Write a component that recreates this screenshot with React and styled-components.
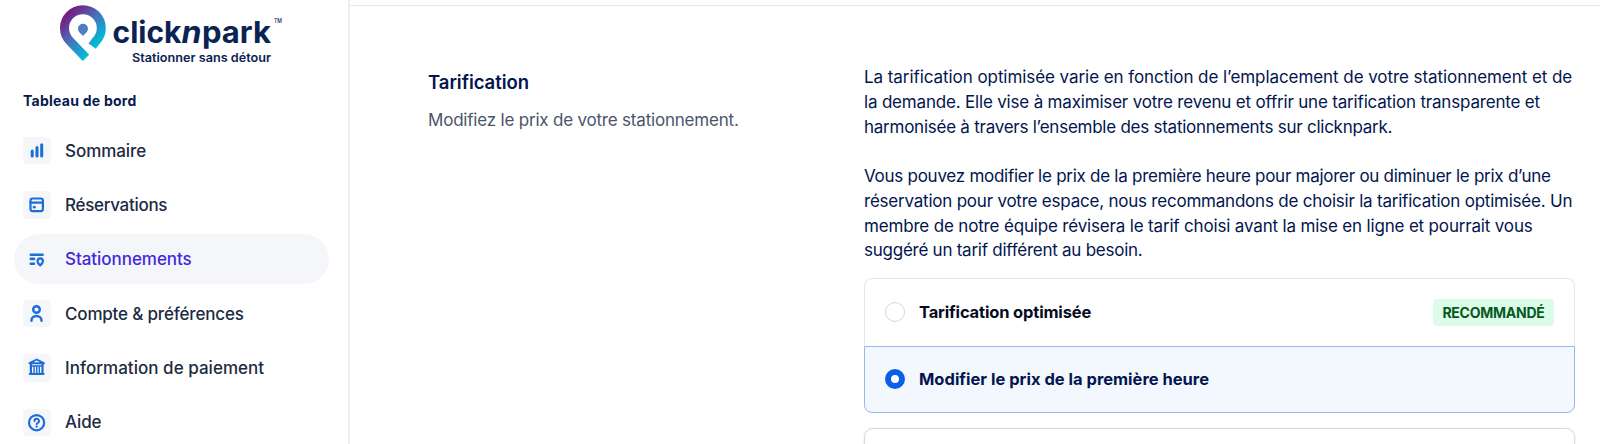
import React from "react";
import styled, { createGlobalStyle } from "styled-components";

const GlobalStyle = createGlobalStyle`
  * { box-sizing: border-box; }
  body {
    margin: 0;
    background: #fff;
    font-family: Inter, "Liberation Sans", sans-serif;
    overflow: hidden;
  }
`;

const Page = styled.div`
  display: flex;
  height: 444px;
  overflow: hidden;
`;

const Sidebar = styled.aside`
  width: 350px;
  flex: none;
  border-right: 2px solid #ededf6;
`;

const Logo = styled.svg`
  display: block;
  width: 348px;
  height: 70px;
`;

const SidebarTitle = styled.h2`
  margin: 19px 0 12.5px 23px;
  font-size: 14px;
  line-height: 24px;
  font-weight: 700;
  letter-spacing: ${(p) => p.$spacing}px;
  color: #071a4d;
`;

const Nav = styled.nav`
  display: flex;
  flex-direction: column;
  gap: 4.4px;
  padding: 0 19.5px 0 13.5px;
`;

const NavItem = styled.a`
  display: flex;
  align-items: center;
  gap: 14.5px;
  height: 50px;
  padding-left: 9.5px;
  border-radius: 25px;
  background: ${(p) => (p.$active ? "#f4f6fa" : "transparent")};
  color: ${(p) => (p.$active ? "#4429dc" : "#1c2b42")};
`;

const IconBox = styled.span`
  display: flex;
  width: 27.5px;
  height: 27.5px;
  border-radius: 4px;
  background: #f4f6fa;
`;

const Icon = styled.svg`
  width: 27.5px;
  height: 27.5px;
  fill: none;
  stroke: #1d6dd8;
  stroke-width: 2.2;
  stroke-linecap: round;
  stroke-linejoin: round;
`;

const NavLabel = styled.span`
  font-size: 17px;
  font-weight: 500;
  line-height: 24px;
  white-space: nowrap;
  letter-spacing: ${(p) => p.$spacing}px;
`;

const Main = styled.main`
  flex: 1;
  display: flex;
  margin-top: 5px;
  padding: 59px 25px 0 78px;
  border-top: 1px solid #e6e7ec;
`;

const Intro = styled.section`
  width: 436px;
  flex: none;
`;

const Heading = styled.h1`
  margin: 2.5px 0 0;
  font-size: 18.5px;
  font-weight: 600;
  line-height: 28px;
  letter-spacing: ${(p) => p.$spacing}px;
  color: #03154e;
`;

const Subheading = styled.p`
  margin: 12px 0 0;
  font-size: 17px;
  line-height: 25px;
  letter-spacing: ${(p) => p.$spacing}px;
  color: #4a5568;
`;

const Pricing = styled.section`
  flex: 1;
  min-width: 0;
`;

const Paragraph = styled.p`
  margin: 0 0 24.8px;
  color: #03154e;
  font-size: 17px;
  line-height: 24.75px;
`;

const Line = styled.span`
  display: block;
  white-space: nowrap;
  letter-spacing: ${(p) => p.$spacing}px;
`;

const Options = styled.div`
  margin-top: -10px;
`;

const Option = styled.label`
  display: flex;
  align-items: center;
  height: ${(p) => (p.$selected ? "67px" : "68px")};
  padding: 0 20px;
  border: 1px solid ${(p) => (p.$selected ? "#94b8f5" : "#e5e7eb")};
  border-bottom-width: ${(p) => (p.$selected ? "1px" : "0")};
  border-radius: ${(p) => (p.$selected ? "0 0 8px 8px" : "8px 8px 0 0")};
  background: ${(p) => (p.$selected ? "#f3f8ff" : "#fff")};
  color: ${(p) => (p.$selected ? "#03154e" : "#060b1e")};
`;

const Radio = styled.span`
  width: 20px;
  height: 20px;
  flex: none;
  margin-right: 14px;
  border-radius: 50%;
  background: #fff;
  border: ${(p) => (p.$selected ? "6px solid #0a5fe8" : "1px solid #d4d6e0")};
`;

const OptionLabel = styled.span`
  flex: 1;
  font-size: 16.5px;
  font-weight: 700;
  line-height: 24px;
  white-space: nowrap;
  letter-spacing: ${(p) => p.$spacing}px;
`;

const Badge = styled.span`
  width: 121px;
  height: 27px;
  border-radius: 4px;
  background: #dcfce7;
  color: #07571f;
  font-size: 14px;
  font-weight: 700;
  line-height: 28px;
  text-align: center;
  white-space: nowrap;
  letter-spacing: ${(p) => p.$spacing}px;
`;

const PriceCard = styled.div`
  height: 60px;
  margin-top: 15px;
  border: 1px solid #d6daea;
  border-radius: 9px;
  box-shadow: 0 0 2px rgba(40, 50, 90, 0.15);
`;

const icons = {
  bars: (
    <path d="M9.2 13.9V18.900M14 10.600V18.900M18.700 7.700V18.900" strokeWidth="3" />
  ),
  calendar: (
    <>
      <rect x="7.500" y="7.500" width="12.400" height="12.600" rx="2" />
      <path d="M7.500 11.700H19.900" />
      <path d="M11.200 16.200h.2" strokeWidth="2.700" />
    </>
  ),
  parking: (
    <>
      <path d="M7.800 8.700H19.600M7.800 12.900h3.200M7.800 17.700h3.200" strokeWidth="2.600" />
      <path d="M17.200 19.400c-1.700-1.500-2.700-2.700-2.700-4.200a2.700 2.800 0 0 1 5.400 0c0 1.500-1 2.700-2.700 4.200z" />
    </>
  ),
  user: (
    <>
      <circle cx="13.500" cy="9.500" r="3.300" strokeWidth="2.400" />
      <path d="M8.500 20.800v-.6a5 4.200 0 0 1 10 0v.6" strokeWidth="2.400" />
    </>
  ),
  bank: (
    <>
      <path d="M6.500 9.200 13.700 5.500l7.200 3.700z" strokeWidth="1.900" />
      <path d="M6.800 19.800H20.600M7.900 10.500V19M19.500 10.500V19" />
      <path d="M11.100 13.200v5M13.700 13.200v5M16.300 13.200v5M8 12h11.500" strokeWidth="1.400" />
    </>
  ),
  help: (
    <>
      <circle cx="13.600" cy="13.700" r="7.600" />
      <path d="M11.400 12a2.300 2.200 0 1 1 3.400 1.900c-.8.4-1.100.7-1.100 1.300" strokeWidth="1.900" />
      <path d="M13.700 17.600v.1" />
    </>
  ),
};

const navItems = [
  { label: "Sommaire", icon: "bars", spacing: -0.05 },
  { label: "Réservations", icon: "calendar", spacing: -0.3 },
  { label: "Stationnements", icon: "parking", spacing: -0.05, active: true },
  { label: "Compte & préférences", icon: "user", spacing: -0.18 },
  { label: "Information de paiement", icon: "bank", spacing: 0.03 },
  { label: "Aide", icon: "help", spacing: -0.1 },
];

const paragraphs = [
  [
    ["La tarification optimisée varie en fonction de l’emplacement de votre stationnement et de", -0.065],
    ["la demande. Elle vise à maximiser votre revenu et offrir une tarification transparente et", -0.185],
    ["harmonisée à travers l’ensemble des stationnements sur clicknpark.", -0.25],
  ],
  [
    ["Vous pouvez modifier le prix de la première heure pour majorer ou diminuer le prix d’une", -0.265],
    ["réservation pour votre espace, nous recommandons de choisir la tarification optimisée. Un", -0.22],
    ["membre de notre équipe révisera le tarif choisi avant la mise en ligne et pourrait vous", -0.17],
    ["suggéré un tarif différent au besoin.", -0.25],
  ],
];

function BrandLogo() {
  return (
    <Logo viewBox="0 0 348 70" role="img" aria-label="clicknpark">
      <defs>
        <linearGradient id="pin" gradientUnits="userSpaceOnUse" x1="66" y1="16" x2="98" y2="48">
          <stop offset="0" stopColor="#741f83" />
          <stop offset="0.45" stopColor="#4b6fb8" />
          <stop offset="0.85" stopColor="#08b0d6" />
          <stop offset="1" stopColor="#12bfd2" />
        </linearGradient>
      </defs>
      <path
        d="M86 57.8 69.9 41.1A18.4 18.4 0 1 1 96 41L92.2 46.2"
        fill="none"
        stroke="url(#pin)"
        strokeWidth="9"
      />
      <path d="M83 36c-2.6-2.7-5-4.400-5-7.200a5 5 0 0 1 10 0c0 2.800-2.400 4.500-5 7.200z" fill="#4b7fc0" />
      <g fill="#0b2352" fontWeight="700">
        <text x="112.500" y="42.500" fontSize="30" textLength="69" lengthAdjust="spacingAndGlyphs">click</text>
        <text x="181.500" y="42.500" fontSize="30" fontStyle="italic" textLength="20" lengthAdjust="spacingAndGlyphs">n</text>
        <text x="202" y="42.500" fontSize="30" textLength="69" lengthAdjust="spacingAndGlyphs">park</text>
        <text x="274" y="23" fontSize="5.500" fontWeight="500" textLength="8" lengthAdjust="spacingAndGlyphs">TM</text>
        <text x="132" y="61.500" fontSize="12" fontWeight="600" textLength="139" lengthAdjust="spacingAndGlyphs">
          Stationner sans détour
        </text>
      </g>
    </Logo>
  );
}

export default function App() {
  return (
    <>
      <GlobalStyle />
      <Page>
        <Sidebar>
          <BrandLogo />
          <SidebarTitle $spacing={0.25}>Tableau de bord</SidebarTitle>
          <Nav>
            {navItems.map((item) => (
              <NavItem key={item.label} $active={item.active}>
                <IconBox>
                  <Icon viewBox="0 0 27.5 27.5">{icons[item.icon]}</Icon>
                </IconBox>
                <NavLabel $spacing={item.spacing}>{item.label}</NavLabel>
              </NavItem>
            ))}
          </Nav>
        </Sidebar>
        <Main>
          <Intro>
            <Heading $spacing={-0.05}>Tarification</Heading>
            <Subheading $spacing={-0.2}>Modifiez le prix de votre stationnement.</Subheading>
          </Intro>
          <Pricing>
            {paragraphs.map((lines, i) => (
              <Paragraph key={i}>
                {lines.map(([text, spacing]) => (
                  <Line key={text} $spacing={spacing}>{text}</Line>
                ))}
              </Paragraph>
            ))}
            <Options>
              <Option>
                <Radio />
                <OptionLabel $spacing={-0.16}>Tarification optimisée</OptionLabel>
                <Badge $spacing={-0.25}>RECOMMANDÉ</Badge>
              </Option>
              <Option $selected>
                <Radio $selected />
                <OptionLabel $spacing={0}>Modifier le prix de la première heure</OptionLabel>
              </Option>
            </Options>
            <PriceCard />
          </Pricing>
        </Main>
      </Page>
    </>
  );
}
